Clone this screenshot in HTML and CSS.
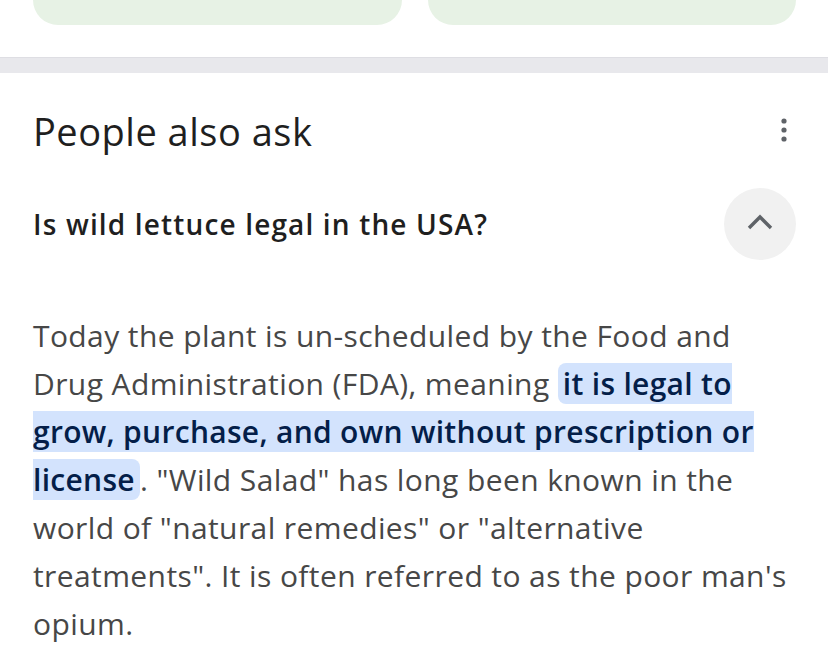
FILE: index.html
```html
<!DOCTYPE html>
<html lang="en">
<head>
    <meta charset="UTF-8">
    <meta name="viewport" content="width=device-width, initial-scale=1.0">
    <title>People also ask</title>
    <link rel="stylesheet" href="styles.css">
</head>
<body>
    <div class="cards">
        <div class="card"></div>
        <div class="card"></div>
    </div>

    <div class="divider"></div>

    <div class="paa">
        <div class="paaHeader">
            <h2>People also ask</h2>
            <button class="moreBtn" aria-label="More options">
                <svg width="6" height="24" viewBox="0 0 6 24">
                    <circle cx="3" cy="3" r="2.6" fill="#5f6368"/>
                    <circle cx="3" cy="12" r="2.6" fill="#5f6368"/>
                    <circle cx="3" cy="21" r="2.6" fill="#5f6368"/>
                </svg>
            </button>
        </div>

        <div class="question">
            <span class="questionText">Is wild lettuce legal in the USA?</span>
            <button class="toggleBtn" aria-label="Collapse">
                <svg width="26" height="16" viewBox="0 0 26 16">
                    <path d="M2 14 L13 3 L24 14" fill="none" stroke="#5f6368" stroke-width="3.4" stroke-linejoin="miter"/>
                </svg>
            </button>
        </div>

        <p class="answer">Today the plant is un-scheduled by the Food and Drug Administration (FDA), meaning <span class="hl">it is legal to grow, purchase, and own without prescription or license</span>. "Wild Salad" has long been known in the world of "natural remedies" or "alternative treatments". It is often referred to as the poor man's opium.</p>
    </div>
</body>
</html>
```

FILE: styles.css
```css
body {
    margin: 0;
    background-color: #fff;
    font-family: "Open Sans", "Noto Sans", Arial, sans-serif;
    overflow: hidden;
}

.cards {
    display: flex;
    gap: 26px;
    padding: 0 32px 0 33px;
    height: 25px;
}

.card {
    flex: 1;
    height: 25px;
    background-color: #e7f2e5;
    border-radius: 0 0 26px 26px;
}

.divider {
    margin-top: 32px;
    height: 15px;
    background-color: #e8e8ec;
    border-top: 1px solid #dedee3;
}

.paa {
    padding: 0 33px;
}

.paaHeader {
    display: flex;
    align-items: center;
    justify-content: space-between;
    margin-top: 32px;
}

.paaHeader h2 {
    margin: 0;
    font-size: 38px;
    line-height: 52px;
    font-weight: 400;
    color: #1f1f1f;
    letter-spacing: 0.5px;
}

.moreBtn {
    background: none;
    border: none;
    padding: 0;
    margin: 0 8px 2px 0;
    display: flex;
}

.question {
    display: flex;
    align-items: center;
    justify-content: space-between;
    margin-top: 31px;
    color: #1f1f1f;
}

.questionText {
    font-size: 28px;
    font-weight: 600;
    letter-spacing: 1.15px;
}

.toggleBtn {
    width: 72px;
    height: 72px;
    margin-right: -1px;
    border: none;
    border-radius: 50%;
    background-color: #f1f1f1;
    display: flex;
    align-items: center;
    justify-content: center;
    padding: 0 0 4px;
}

.answer {
    margin: 52px 0 0;
    max-width: 760px;
    font-size: 30px;
    line-height: 48px;
    color: #474747;
    letter-spacing: 0.4px;
}

.hl {
    background-color: #d3e3fd;
    color: #041e49;
    font-weight: 600;
    letter-spacing: 0.3px;
    border-radius: 8px;
    padding: 0 5px;
}
```
